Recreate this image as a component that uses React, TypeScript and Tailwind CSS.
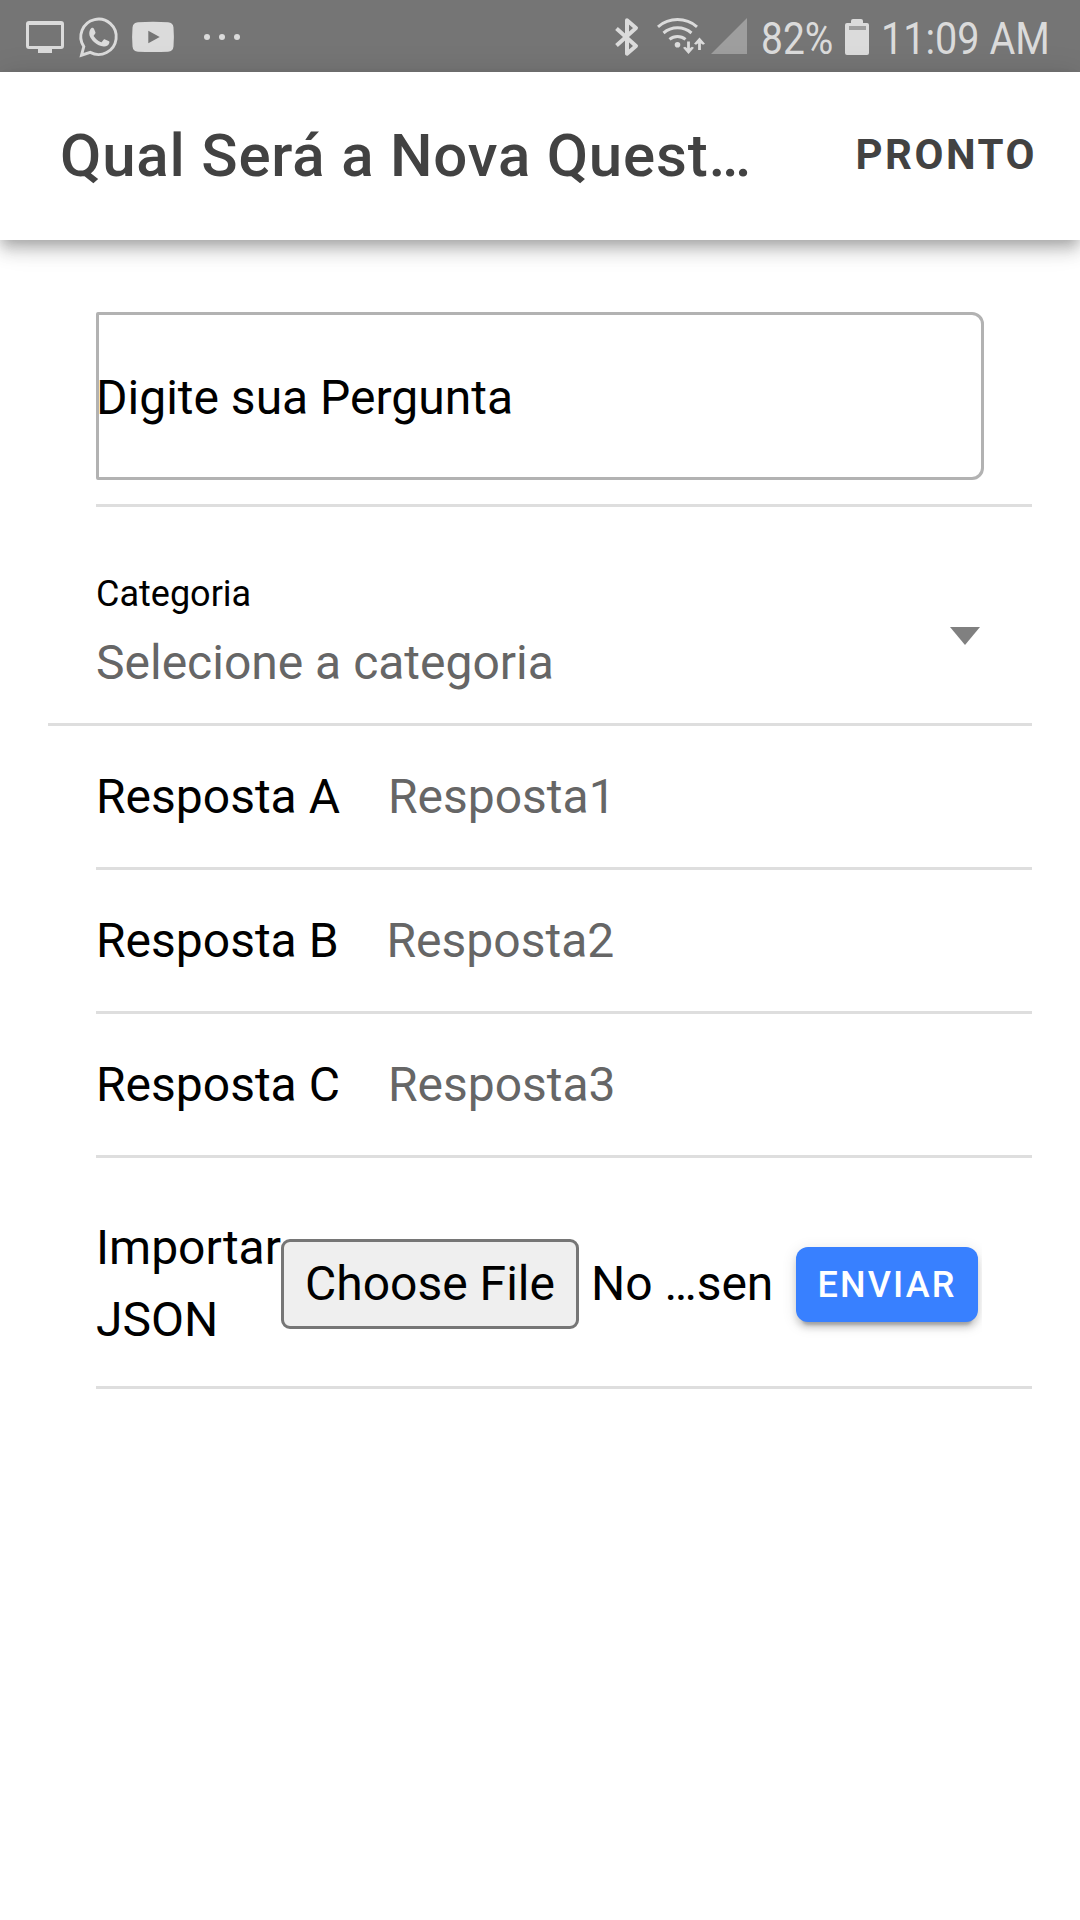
import type { ReactNode } from "react";

function NotificationIcons() {
  return (
    <svg width="245" height="72" viewBox="0 0 245 72" fill="#dbdbdb" aria-hidden="true">
      <path fillRule="evenodd" d="M29 21h32a3 3 0 0 1 3 3v22a3 3 0 0 1-3 3h-9v4H38v-4h-9a3 3 0 0 1-3-3V24a3 3 0 0 1 3-3Zm0 4v21h32V25Z" />
      <path d="M81.5 55.2 83.8 46.6A17.7 17.7 0 1 1 90.2 52.4Z" fill="none" stroke="#dbdbdb" strokeWidth="2.9" />
      <path
        transform="translate(89 28) scale(.88) translate(-89 -28)"
        d="M91.8 28c1-.4 2.2-.4 2.8.8l1.7 4c.3 1-.3 1.9-1.6 3.4-.5.6-.4 1 0 1.6 2 3 4.300 4.900 7.400 6.200.7.3 1.100.2 1.600-.4l1.900-2.300c.5-.6 1-.6 1.700-.3l3.900 1.900c.7.4 1.100.6 1 1.500-.4 3-3.600 5-6.500 4.700-7.800-1.200-14.300-7-16.200-13-.7-3 .4-6.500 2.300-8.100Z"
      />
      <path fillRule="evenodd" d="M138 22.300q15-1 30 0 5 .3 5.500 5.200.8 9.500 0 19-.5 4.900-5.500 5.200-15 .8-30 0-5-.3-5.500-5.200-.8-9.500 0-19 .5-4.900 5.500-5.200ZM148.300 30.700v12.600l11.400-6.300Z" />
      <circle cx="207" cy="37" r="3" />
      <circle cx="222" cy="37" r="3" />
      <circle cx="237" cy="37" r="3" />
    </svg>
  );
}

function ConnectivityIcons() {
  return (
    <svg width="139" height="72" viewBox="610 0 139 72" fill="none" aria-hidden="true">
      <path d="M616.500 28.500 636 46 627 53.700V20.300L636 28 616.500 45.500" stroke="#dbdbdb" strokeWidth="4" strokeLinejoin="round" />
      <g stroke="#dbdbdb" strokeWidth="3">
        <path d="M658 26.800a30 30 0 0 1 39 0" />
        <path d="M663.500 33a21.500 21.500 0 0 1 28 0" />
        <path d="M669.500 39.300a12.500 12.500 0 0 1 16 0" />
      </g>
      <circle cx="677.500" cy="44.700" r="2.800" fill="#dbdbdb" />
      <path d="M688.500 41.500V50M699.500 50V41" stroke="#dbdbdb" strokeWidth="2.800" />
      <path d="M683 47.800l2-1 3.500 2.200 3.500-2.200 2 1-5.500 6.200ZM694 43.700l2 1 3.500-2.200 3.500 2.200 2-1-5.500-6.200Z" fill="#dbdbdb" />
      <path d="M711 54h36V18Z" fill="#9e9e9e" />
    </svg>
  );
}

function BatteryIcon() {
  return (
    <svg width="24" height="72" viewBox="845 0 24 72" aria-hidden="true">
      <path d="M847 23h4v-2q0-2 2-2h8q2 0 2 2v2h4q2 0 2 2v28q0 2-2 2h-20q-2 0-2-2V25q0-2 2-2Z" fill="#dbdbdb" />
      <path d="M849 26h17v4h-17Z" fill="#9e9e9e" />
    </svg>
  );
}

function StatusBar() {
  return (
    <div className="flex h-[72px] items-center bg-[#757575] text-[45px] leading-[66px] whitespace-nowrap text-[#dbdbdb]">
      <NotificationIcons />
      <div className="ml-[365px]">
        <ConnectivityIcons />
      </div>
      <div className="ml-[12px] w-[84px] pt-[6px]">
        <span className="inline-block origin-left scale-x-[0.865]">82%</span>
      </div>
      <BatteryIcon />
      <div className="ml-[12px] pt-[6px]">
        <span className="inline-block origin-left scale-x-[0.88]">11:09 AM</span>
      </div>
    </div>
  );
}

function Row({ children }: { children: ReactNode }) {
  return (
    <div className="ml-[48px] flex h-[144px] items-center border-b-[3px] border-[#dedede]">{children}</div>
  );
}

const answers = [
  ["Resposta A", "Resposta1"],
  ["Resposta B", "Resposta2"],
  ["Resposta C", "Resposta3"],
];

export default function App() {
  return (
    <div className="h-[1920px] w-[1080px] overflow-hidden bg-white font-[Roboto,sans-serif] text-[48px] leading-[72px] text-black">
      <StatusBar />
      <header className="relative flex h-[168px] items-center justify-between bg-white pr-[43px] pl-[60px] text-[#424242] shadow-[0_6px_12px_-3px_rgba(0,0,0,0.2),0_12px_15px_0_rgba(0,0,0,0.14),0_3px_30px_0_rgba(0,0,0,0.12)]">
        <h1 className="text-[60px] font-medium tracking-[0.8px] whitespace-nowrap">Qual Será a Nova Quest…</h1>
        <button className="pb-[2px] text-[42px] font-bold tracking-[0.06em]">PRONTO</button>
      </header>

      <main className="px-[48px] pt-[48px]">
        <div className="ml-[48px] border-b-[3px] border-[#dedede] pt-[24px] pb-[24px]">
          <div className="flex h-[168px] w-[888px] items-center rounded-l-[2px] rounded-r-[12px] border-[3px] border-[#b2b2b2]">
            <span className="-ml-[3px] pt-[3px]">Digite sua Pergunta</span>
          </div>
        </div>

        <div className="flex h-[219px] items-start justify-between border-b-[3px] border-[#dedede] pr-[52px] pl-[48px]">
          <div className="pt-[60px]">
            <div className="text-[36px] leading-[54px]">Categoria</div>
            <div className="mt-[6px] text-[#666]">Selecione a categoria</div>
          </div>
          <svg width="30" height="18" viewBox="0 0 30 18" className="mt-[120px]" fill="#808080" aria-hidden="true">
            <path d="M0 0h30L15 18Z" />
          </svg>
        </div>

        {answers.map(([label, value]) => (
          <Row key={label}>
            <span>{label}</span>
            <span className="ml-[48px] text-[#666]">{value}</span>
          </Row>
        ))}

        <div className="ml-[48px] border-b-[3px] border-[#dedede]">
          <div className="flex h-[228px] w-[886px] items-center overflow-hidden pt-[24px]">
            <div className="w-[185px] shrink-0">Importar JSON</div>
            <button className="h-[90px] w-[298px] shrink-0 rounded-[9px] border-[3px] border-[#767676] bg-[#efefef] leading-[84px] whitespace-nowrap">
              Choose File
            </button>
            <span className="ml-[12px] w-[205px] shrink-0 whitespace-nowrap">No …sen</span>
            <button className="h-[75px] w-[182px] shrink-0 rounded-[12px] bg-[#3880ff] text-[36px] leading-[77px] font-medium tracking-[0.06em] text-white shadow-[0_9px_3px_-6px_rgba(0,0,0,0.2),0_6px_6px_0_rgba(0,0,0,0.14),0_3px_15px_0_rgba(0,0,0,0.12)]">
              ENVIAR
            </button>
          </div>
        </div>
      </main>
    </div>
  );
}
